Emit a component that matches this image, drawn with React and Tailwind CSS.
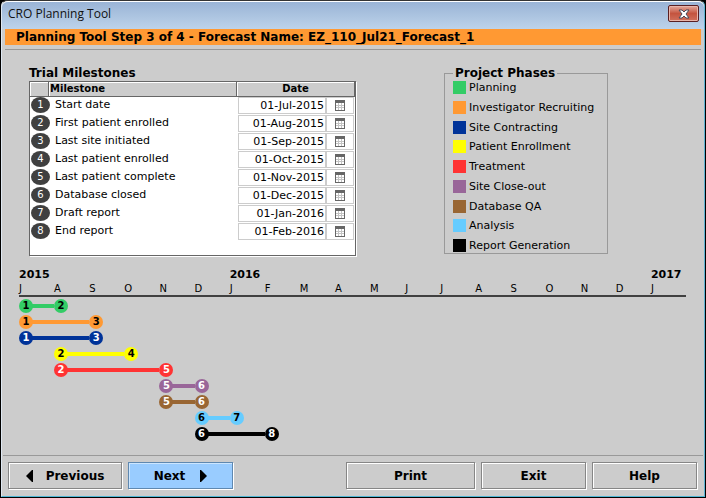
import { useState } from "react";

const milestones = [
  { name: "Start date", date: "01-Jul-2015" },
  { name: "First patient enrolled", date: "01-Aug-2015" },
  { name: "Last site initiated", date: "01-Sep-2015" },
  { name: "Last patient enrolled", date: "01-Oct-2015" },
  { name: "Last patient complete", date: "01-Nov-2015" },
  { name: "Database closed", date: "01-Dec-2015" },
  { name: "Draft report", date: "01-Jan-2016" },
  { name: "End report", date: "01-Feb-2016" },
];

// Each phase runs between two milestones; milestone n falls in month column n.
const phases = [
  { name: "Planning", color: "bg-[#33cc66]", text: "text-black", from: 1, to: 2 },
  { name: "Investigator Recruiting", color: "bg-[#ff9933]", text: "text-black", from: 1, to: 3 },
  { name: "Site Contracting", color: "bg-[#003399]", text: "text-white", from: 1, to: 3 },
  { name: "Patient Enrollment", color: "bg-[#ffff00]", text: "text-black", from: 2, to: 4 },
  { name: "Treatment", color: "bg-[#ff3333]", text: "text-white", from: 2, to: 5 },
  { name: "Site Close-out", color: "bg-[#996699]", text: "text-white", from: 5, to: 6 },
  { name: "Database QA", color: "bg-[#996633]", text: "text-white", from: 5, to: 6 },
  { name: "Analysis", color: "bg-[#66ccff]", text: "text-black", from: 6, to: 7 },
  { name: "Report Generation", color: "bg-black", text: "text-white", from: 6, to: 8 },
];

const months = "JASONDJFMAMJJASONDJ".split("");
const years = { 0: "2015", 6: "2016", 18: "2017" };

function CalendarIcon() {
  return (
    <svg width="10" height="11" viewBox="0 0 10 11" shapeRendering="crispEdges" aria-hidden="true">
      <rect width="10" height="11" fill="#666" />
      <rect x="1" y="3" width="8" height="7" fill="#c4c4c4" />
      <path d="M1 3h2v2H1zM4 3h2v2H4zM7 3h2v2H7zM1 6h2v1H1zM4 6h2v1H4zM7 6h2v1H7zM1 8h2v2H1zM4 8h2v2H4zM7 8h2v2H7z" fill="#fff" />
    </svg>
  );
}

function Arrow({ right }) {
  return (
    <svg width="7" height="12" viewBox="0 0 7 12" aria-hidden="true">
      <path d={right ? "M0 0h1l6 6-6 6H0z" : "M7 0H6L0 6l6 6h1z"} />
    </svg>
  );
}

function PushButton({ className, children }) {
  return (
    <button
      type="button"
      className={`flex h-[27px] min-w-0 items-center justify-center border text-[12px] leading-4 font-bold ${className}`}
    >
      {children}
    </button>
  );
}

const gray =
  "border-[#868686] bg-[#cccccc] shadow-[inset_1px_1px_0_#fff,1px_1px_0_#fff]";

function Marker({ phase, n }) {
  return (
    <span
      className={`z-10 row-start-1 flex size-[14px] items-center justify-center rounded-full text-[10px] leading-[14px] font-bold ${phase.color} ${phase.text}`}
      style={{ gridColumnStart: n }}
    >
      {n}
    </span>
  );
}

function MilestoneTable() {
  const [dates, setDates] = useState(milestones.map((m) => m.date));
  return (
    <section className="w-[327px]">
      <h2 id="milestones" className="text-[12px] leading-4 font-bold">Trial Milestones</h2>
      <div className="border-t border-r border-b border-l border-[#666] bg-white pb-[14px] shadow-[1px_1px_0_#fff]">
        <table aria-labelledby="milestones" className="w-full table-fixed border-separate border-spacing-0 text-[11px] leading-[14px]">
          <colgroup>
            <col className="w-[19px]" />
            <col />
            <col className="w-[89px]" />
            <col className="w-[29px]" />
          </colgroup>
          <thead>
            <tr className="h-[15px] bg-[#cccccc] text-[10px]">
              <th aria-label="Number" className="border-r border-b border-[#666] p-0 shadow-[inset_1px_1px_0_#fff]" />
              <th className="border-r border-b border-[#666] p-0 pl-px text-left shadow-[inset_1px_1px_0_#fff]">Milestone</th>
              <th colSpan={2} className="border-r border-b border-[#666] p-0 text-center shadow-[inset_1px_1px_0_#fff]">Date</th>
            </tr>
          </thead>
          <tbody>
            {milestones.map((m, i) => (
              <tr key={m.name} className="h-[18px] align-top">
                <td className="p-0 pl-px">
                  <span className="flex h-4 w-[19px] items-center justify-center rounded-[50%] bg-[#404040] text-[10px] text-white">
                    {i + 1}
                  </span>
                </td>
                <td className="p-0 pl-[6px]">
                  <label htmlFor={`date-${i}`} className="block leading-4">{m.name}</label>
                </td>
                <td className="p-0 pl-px">
                  <input
                    id={`date-${i}`}
                    value={dates[i]}
                    onChange={(e) => setDates(dates.map((d, k) => (k === i ? e.target.value : d)))}
                    className="block h-[17px] w-full border border-[#ccc] pr-px text-right outline-none"
                  />
                </td>
                <td className="p-0 pr-px">
                  <button
                    type="button"
                    aria-label={`Pick ${m.name}`}
                    className="flex h-[17px] w-full items-center justify-center border border-[#ccc]"
                  >
                    <CalendarIcon />
                  </button>
                </td>
              </tr>
            ))}
          </tbody>
        </table>
      </div>
    </section>
  );
}

function Legend() {
  return (
    <fieldset className="h-[189px] w-[164px] border border-[#999] pl-2">
      <legend className="px-[2px] text-[12px] leading-4 font-bold">Project Phases</legend>
      <ul className="flex h-[171px] flex-col justify-between">
        {phases.map((p) => (
          <li key={p.name} className="flex h-[13px] items-center gap-[3px] text-[11px] leading-[13px] whitespace-nowrap">
            <span className={`size-[13px] shrink-0 ${p.color}`} />
            {p.name}
          </li>
        ))}
      </ul>
    </fieldset>
  );
}

function Timeline() {
  return (
    <section aria-label="Timeline" className="mt-[11px] mr-[14px] ml-[13px]">
      <div className="grid grid-cols-19 border-b-2 border-[#404040]">
        {months.map((m, i) => (
          <div key={i} className="flex min-w-0 flex-col whitespace-nowrap">
            <span className="h-4 text-[11px] leading-4 font-bold">{years[i]}</span>
            <span className="h-3 text-[10px] leading-3">{m}</span>
          </div>
        ))}
      </div>
      <div className="mt-[2px] flex flex-col gap-[2px]">
        {phases.map((p) => (
          <div key={p.name} className="grid h-[14px] grid-cols-19 items-center">
            <span
              className={`row-start-1 ml-[7px] h-1 ${p.color}`}
              style={{ gridColumn: `${p.from} / ${p.to}` }}
            />
            <Marker phase={p} n={p.from} />
            <Marker phase={p} n={p.to} />
          </div>
        ))}
      </div>
    </section>
  );
}

export default function App() {
  return (
    <div className="flex min-h-screen flex-col bg-black pr-px pb-px pl-px font-['DejaVu_Sans',Verdana,sans-serif] text-black">
      <main className="flex grow flex-col rounded-t-md border border-t-[#333] border-r-[#5fb4d2] border-b-[#4fb6d4] border-l-[#dfe8f2] bg-[#cccccc]">
        <header className="flex h-7 items-start justify-between rounded-t-md border-t border-white bg-linear-to-b from-[#9ab4d6] to-[#bdd3ea] pr-1 pl-[6px]">
          <h1 className="pt-[2px] font-['Open_Sans',sans-serif] text-[12px] leading-5 text-[#111]">CRO Planning Tool</h1>
          <button
            type="button"
            aria-label="Close"
            className="mt-[3px] mr-px flex h-[17px] w-[31px] items-center justify-center rounded-xs border border-[#5a1f22] bg-linear-to-b from-[#e2a79b] via-[#c4543f] via-50% to-[#d0705c] shadow-[inset_0_0_0_1px_#e8b5aa]"
          >
            <svg width="12" height="10" viewBox="0 0 12 10" aria-hidden="true">
              <path d="M1 1h3l2 2 2-2h3L8 5l3 4H8L6 7 4 9H1l3-4z" fill="#fff" stroke="#4a4a5a" strokeWidth="1" />
            </svg>
          </button>
        </header>
        <div className="mr-[3px] ml-[3px] border-b border-[#999] pb-1">
          <p className="bg-[#ff9933] px-[11px] text-[12px] leading-4 font-bold">
            Planning Tool Step 3 of 4 - Forecast Name: EZ_110_Jul21_Forecast_1
          </p>
        </div>
        <div className="mx-1">
          <div className="flex items-start gap-[88px] pt-[15px] pl-[23px]">
            <MilestoneTable />
            <Legend />
          </div>
          <Timeline />
        </div>
        <footer className="mt-auto mr-px ml-px flex gap-[6px] border-t border-[#999] pt-[6px] pr-[6px] pb-[7px] pl-[5px]">
          <PushButton className={`w-[114px] gap-[13px] ${gray}`}>
            <Arrow />
            Previous
          </PushButton>
          <PushButton className="w-[105px] gap-[15px] border-[#5f88b0] bg-[#99ccff] shadow-[inset_1px_1px_0_#cce6ff,1px_1px_0_#fff]">
            Next
            <Arrow right />
          </PushButton>
          <PushButton className={`ml-auto w-[129px] ${gray}`}>Print</PushButton>
          <PushButton className={`w-[105px] ${gray}`}>Exit</PushButton>
          <PushButton className={`w-[105px] ${gray}`}>Help</PushButton>
        </footer>
      </main>
    </div>
  );
}
